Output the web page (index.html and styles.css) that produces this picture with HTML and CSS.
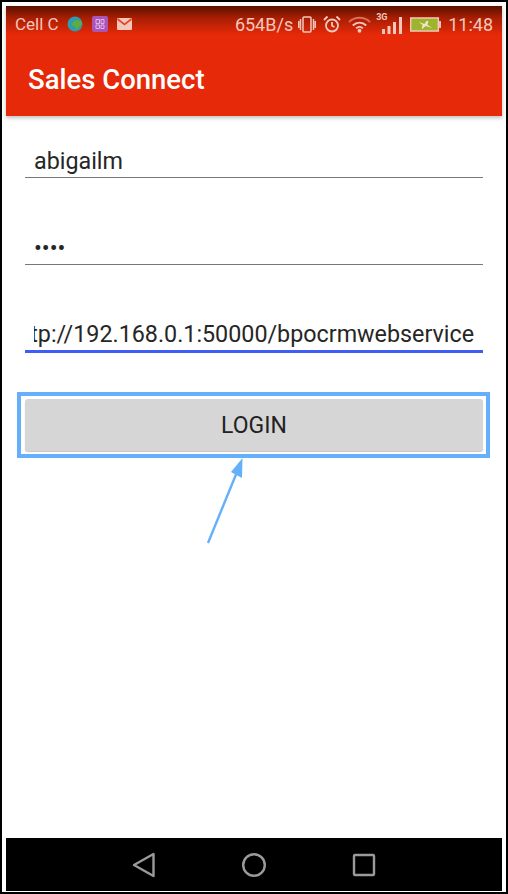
FILE: index.html

```html
<!DOCTYPE html>
<html lang="en">
<head>
  <meta charset="UTF-8" />
  <meta name="viewport" content="width=device-width, initial-scale=1.0"/>
  <title>Sales Connect</title>
  <link rel="stylesheet" href="styles.css">
</head>
<body>
  <div id="frame">
    <div id="screen">
      <header id="appbar">
        <div id="status">
          <div class="status-side">
            <span class="carrier">Cell C</span>
            <svg class="ic-globe" width="16" height="16" viewBox="0 0 16 16">
              <circle cx="8" cy="8" r="7.5" fill="#2f9bb0"/>
              <path d="M6 6l4-2 4 1 1 3-3 3-3 3-1-3-3-2z" fill="#5fae3c"/>
            </svg>
            <svg class="ic-app" width="16" height="16" viewBox="0 0 16 16">
              <rect width="16" height="16" rx="2" fill="#ab55b8"/>
              <path d="M4 3.5h3.500v4h-3.500zM9 3.500h3v4h-3zM4 9h3.500v3.500h-3.500zM9 9h3v3.500h-3z" fill="none" stroke="#e2b4e4" stroke-width="1"/>
            </svg>
            <svg class="ic-mail" width="15" height="12" viewBox="0 0 15 12">
              <rect width="15" height="12" rx="1" fill="#f3c7bc"/>
              <path d="M0.500 1l7 5.500 7-5.500" fill="none" stroke="#e5451f" stroke-width="1.600"/>
            </svg>
          </div>
          <div class="status-side">
            <span class="speed">654B/s</span>
            <svg class="ic-vibrate" width="18" height="17" viewBox="0 0 18 17" fill="none" stroke="#f3c7bc" stroke-width="1.500">
              <rect x="5" y="1" width="8" height="15" rx="1"/>
              <path d="M2.500 3v11M0.700 5v7M15.500 3v11M17.300 5v7"/>
            </svg>
            <svg class="ic-alarm" width="18" height="18" viewBox="0 0 18 18" fill="none" stroke="#f3c7bc" stroke-width="1.800">
              <circle cx="9" cy="10.500" r="6"/>
              <path d="M9 7v3.700l2.500 1.300M1 5l3.500-3.500M17 5l-3.500-3.500"/>
            </svg>
            <svg class="ic-wifi" width="23" height="17" viewBox="0 0 24 17" fill="none" stroke-width="2">
              <path d="M1 6c6-6 16-6 22 0" stroke="#d9705a"/>
              <path d="M5 9.500c4-4 10-4 14 0M8.500 12.500c2-2 5-2 7 0" stroke="#f3c7bc"/>
              <circle cx="12" cy="15" r="2" fill="#f3c7bc" stroke="none"/>
            </svg>
            <span class="signal">
              <span class="net">3G</span>
              <svg width="20" height="17" viewBox="0 0 20 17" fill="#f3c7bc">
                <rect x="0" y="12" width="3" height="5"/>
                <rect x="5.500" y="9" width="3" height="8"/>
                <rect x="11" y="5" width="3" height="12"/>
                <rect x="17" y="0" width="3" height="17"/>
              </svg>
            </span>
            <svg class="ic-batt" width="31" height="15" viewBox="0 0 32 15">
              <rect x="0.750" y="0.750" width="28.500" height="13.500" fill="#9db52c" stroke="#f3c7bc" stroke-width="1.500"/>
              <rect x="30" y="4" width="2" height="7" fill="#f3c7bc"/>
              <path d="M9 5l6 2 2-3 2 0-1 4 5 3-7-2-3 3-1 0 1-4z" fill="#f3e3d0"/>
            </svg>
            <span class="clock">11:48</span>
          </div>
        </div>
        <h1 id="title">Sales Connect</h1>
      </header>

      <main id="form">
        <div class="field">abigailm</div>
        <div class="field">&#8226;&#8226;&#8226;&#8226;</div>
        <div class="field active">
          <div class="scroll"><span>http://192.168.0.1:50000/bpocrmwebservice</span></div>
        </div>
        <div id="highlight">
          <button id="login">LOGIN</button>
        </div>
      </main>

      <footer id="navbar">
        <svg width="24" height="26" viewBox="0 0 24 26" fill="none" stroke="#9a9a9a" stroke-width="2.400" stroke-linejoin="round">
          <path d="M21.500 2v22L2 13z"/>
        </svg>
        <svg width="26" height="26" viewBox="0 0 26 26" fill="none" stroke="#9a9a9a" stroke-width="2.400">
          <circle cx="13" cy="13" r="10.800"/>
        </svg>
        <svg width="24" height="24" viewBox="0 0 24 24" fill="none" stroke="#9a9a9a" stroke-width="2.400" stroke-linejoin="round">
          <rect x="2" y="2" width="20" height="20" rx="1"/>
        </svg>
      </footer>
    </div>
    <svg id="arrow" width="44" height="92" viewBox="0 0 44 92">
      <path d="M3 89L32 18" fill="none" stroke="#64b0fa" stroke-width="2.400"/>
      <path d="M37.500 4l-0.500 20-11-6z" fill="#64b0fa"/>
    </svg>
  </div>
</body>
</html>
```

FILE: styles.css

```css
* {
  margin: 0;
  padding: 0;
  box-sizing: border-box;
}
html, body {
  width: 100%;
  height: 100%;
  overflow: hidden;
  font-family: Roboto, "Noto Sans", sans-serif;
  background: #fff;
}

#frame {
  position: relative;
  width: 508px;
  height: 894px;
  border: 2px solid #000;
  padding: 4px 4px 1px 4px;
  background: #fff;
}
#screen {
  display: flex;
  flex-direction: column;
  height: 100%;
}

#appbar {
  height: 110px;
  flex-shrink: 0;
  background: #e62908;
  box-shadow: 0 2px 4px rgba(0,0,0,0.25);
}
#status {
  display: flex;
  justify-content: space-between;
  align-items: center;
  height: 34px;
  padding: 2px 9px 0 9px;
  background: linear-gradient(#581000, #a81e04 35%, #e62908 85%);
  color: #f3c7bc;
  font-size: 17px;
}
.status-side {
  display: flex;
  align-items: center;
}
.ic-globe { margin-left: 8px; }
.ic-app { margin-left: 9px; }
.ic-mail { margin-left: 9px; }
.speed { font-size: 18px; }
.ic-vibrate { margin-left: 5px; }
.ic-alarm { margin-left: 7px; }
.ic-wifi { margin-left: 7px; }
.signal {
  position: relative;
  display: flex;
  margin-left: 11px;
  padding-top: 2px;
}
.net {
  position: absolute;
  left: -6px;
  top: -3px;
  font-size: 9px;
  font-weight: 700;
}
.ic-batt { margin-left: 8px; }
.clock { margin-left: 7px; font-size: 18px; }

#title {
  padding: 22px 0 0 22px;
  font-size: 27.500px;
  font-weight: 500;
  line-height: 36px;
  color: #fff;
}

#form {
  flex: 1;
  padding: 30px 19px 0 19px;
}
.field {
  height: 32px;
  margin-bottom: 55px;
  padding-left: 9px;
  border-bottom: 1px solid #777;
  font-size: 23.300px;
  line-height: 30px;
  color: #262626;
  white-space: nowrap;
  overflow: hidden;
}
.active {
  height: 33px;
  margin-bottom: 39px;
  padding: 0 9px 0 9px;
  border-bottom: 3px solid #3f5cf5;
  line-height: 28px;
}
.scroll {
  display: flex;
  justify-content: flex-end;
  overflow: hidden;
}

#highlight {
  margin: 0 -7px 0 -8px;
  height: 66px;
  border: 4px solid #64b0fa;
  padding: 3px 3px 3px 4px;
}
#login {
  display: block;
  width: 100%;
  height: 100%;
  border: none;
  border-radius: 3px;
  background: #d6d6d6;
  box-shadow: 0 1px 1px rgba(120,80,80,0.35);
  color: #222;
  font-family: inherit;
  font-size: 23px;
}

#navbar {
  display: flex;
  justify-content: center;
  align-items: center;
  gap: 85px;
  height: 53px;
  flex-shrink: 0;
  background: #000;
}

/* annotation pointing at the button */
#arrow {
  position: absolute;
  left: 203px;
  top: 452px;
}
```
